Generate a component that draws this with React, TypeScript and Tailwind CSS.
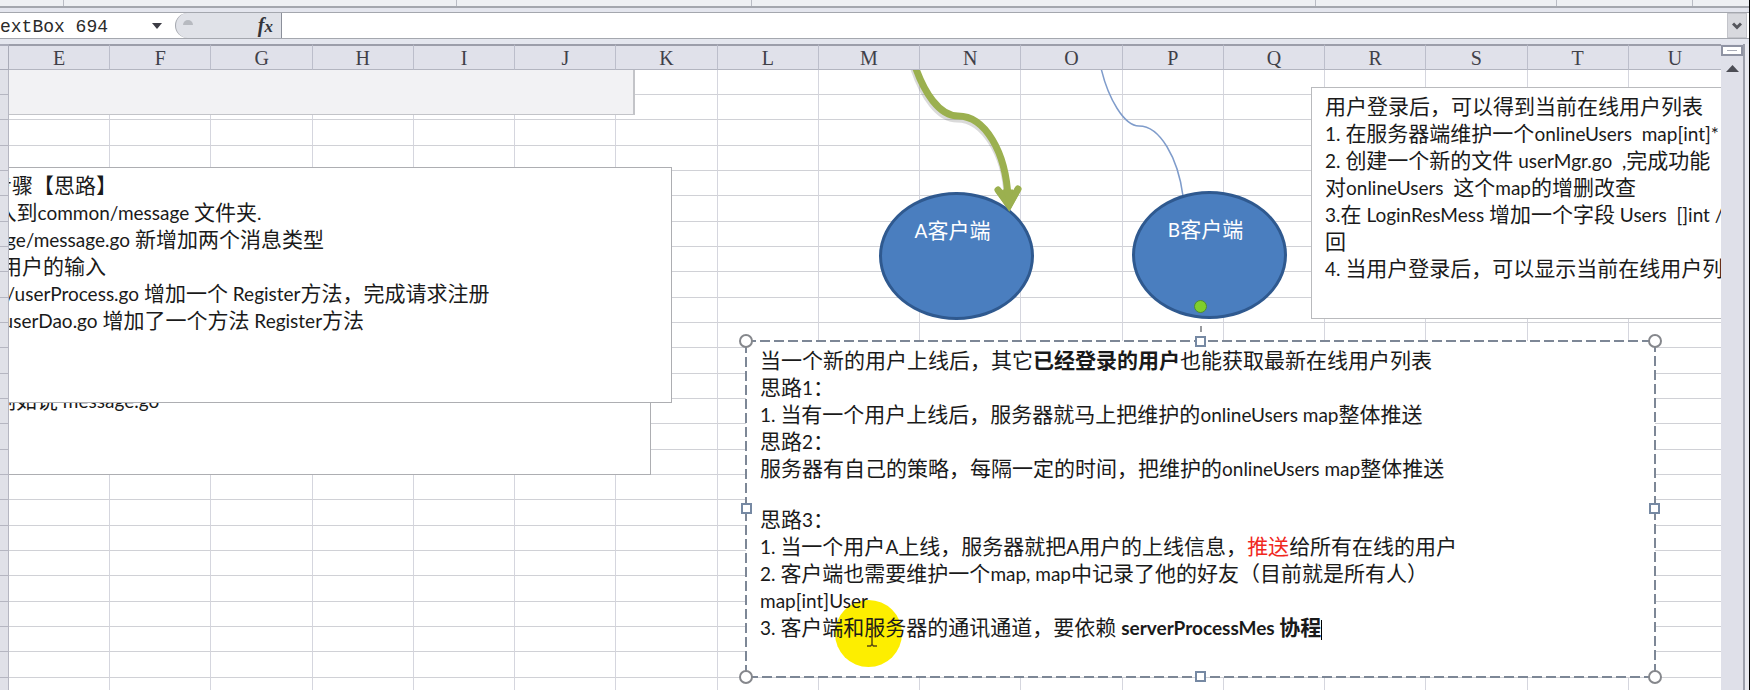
import React from "react";

type Part = { text: string; className?: string };
type Line = Part[];

const columns = ["E", "F", "G", "H", "I", "J", "K", "L", "M", "N", "O", "P", "Q", "R", "S", "T", "U"];
const rows = Array.from({ length: 25 }, (_, i) => i);
const rowHeights = ["h-[25px]", "h-[25px]", "h-[26px]"];

const registerNotes: Line[] = [
  [{ text: "1步骤【思路】" }],
  [{ text: "3.入到common/message 文件夹." }],
  [{ text: "ssage/message.go 新增加两个消息类型" }],
  [{ text: "收用户的输入" }],
  [{ text: "ess/userProcess.go 增加一个 Register方法，完成请求注册" }],
  [{ text: "el/userDao.go 增加了一个方法 Register方法" }],
];

const onlineNotes: Line[] = [
  [{ text: "用户登录后，可以得到当前在线用户列表" }],
  [{ text: "1. 在服务器端维护一个onlineUsers  map[int]*" }],
  [{ text: "2. 创建一个新的文件 userMgr.go  ,完成功能" }],
  [{ text: "对onlineUsers  这个map的增删改查" }],
  [{ text: "3.在 LoginResMess 增加一个字段 Users  []int /" }],
  [{ text: "回" }],
  [{ text: "4. 当用户登录后，可以显示当前在线用户列" }],
];

const pushNotes: Line[] = [
  [
    { text: "当一个新的用户上线后，其它" },
    { text: "已经登录的用户", className: "font-bold" },
    { text: "也能获取最新在线用户列表" },
  ],
  [{ text: "思路1：" }],
  [{ text: "1. 当有一个用户上线后，服务器就马上把维护的onlineUsers map整体推送" }],
  [{ text: "思路2：" }],
  [{ text: "服务器有自己的策略，每隔一定的时间，把维护的onlineUsers map整体推送" }],
  [],
  [{ text: "思路3：" }],
  [
    { text: "1. 当一个用户A上线，服务器就把A用户的上线信息，" },
    { text: "推送", className: "text-[#f0281e]" },
    { text: "给所有在线的用户" },
  ],
  [{ text: "2. 客户端也需要维护一个map, map中记录了他的好友（目前就是所有人）" }],
  [{ text: "map[int]User" }],
  [
    { text: "3. 客户端和服务器的通讯通道，要依赖 " },
    { text: "serverProcessMes 协程", className: "font-bold" },
  ],
];

/* Latin runs are set smaller than the Chinese text around them. */
function Mixed({ text }: { text: string }) {
  return (
    <>
      {text.split(/([\x20-\x7e]+)/).map((run, i) =>
        i % 2 ? (
          <span key={i} className="text-[19px]">
            {run}
          </span>
        ) : (
          run
        ),
      )}
    </>
  );
}

function Notes({ lines, caret = false }: { lines: Line[]; caret?: boolean }) {
  return (
    <div className="whitespace-pre font-['Lato','Noto_Sans_CJK_SC',sans-serif] text-[21px] leading-[27px] text-[#1a1a1a]">
      {lines.map((line, i) =>
        line.length === 0 ? (
          <div key={i} className="h-6" />
        ) : (
          <p key={i} className="h-[27px]">
            {line.map((part, j) => (
              <span key={j} className={part.className}>
                <Mixed text={part.text} />
              </span>
            ))}
            {caret && i === lines.length - 1 && (
              <span className="inline-block h-5 w-px bg-black align-middle" />
            )}
          </p>
        ),
      )}
    </div>
  );
}

function Ribbon() {
  return (
    <div className="flex h-[6px] shrink-0 bg-[#eef0f3]">
      <div className="w-[64px] border-r border-[#b9bcc4]" />
      <div className="w-[393px] border-r border-[#b9bcc4]" />
      <div className="w-[295px] border-r border-[#b9bcc4]" />
      <div className="w-[564px] border-r border-[#b9bcc4]" />
      <div className="w-[241px] border-r border-[#b9bcc4]" />
      <div className="w-[136px] border-r border-[#b9bcc4]" />
    </div>
  );
}

function FormulaBar() {
  return (
    <div className="flex h-[38px] shrink-0 border-t-2 border-[#a4a7ae] bg-[#e4e6ee] pt-[4px] pb-[5px]">
      <div className="flex w-[175px] items-center border-t border-b border-[#a4a7ae] bg-white">
        <label htmlFor="name-box" className="sr-only">
          Name box
        </label>
        <input
          id="name-box"
          defaultValue="extBox 694"
          className="h-full min-w-0 flex-1 bg-transparent pt-[2px] font-['Liberation_Mono',monospace] text-[18px] text-[#2a2a2a] outline-none"
        />
        <button aria-label="Names" className="mr-2 flex h-5 w-5 items-center justify-center">
          <svg width="10" height="6" viewBox="0 0 10 6">
            <path d="M0 0h10L5 6z" fill="#3c3c44" />
          </svg>
        </button>
      </div>
      <div className="flex flex-1 border-t border-b border-[#a4a7ae] bg-white">
        <div className="flex w-[106px] items-center justify-between rounded-l-full border-l border-[#a4a7ae] bg-[#e0e2e8] pr-2 pl-[7px]">
          <svg width="10" height="12" viewBox="0 0 10 12">
            <path d="M0 5a5 5 0 0 1 10 0z" fill="#b7bac0" />
          </svg>
          <button
            aria-label="Insert function"
            className="font-['Liberation_Serif',serif] text-[20px] leading-5 font-bold text-[#33343a] italic"
          >
            f<span className="text-[17px]">x</span>
          </button>
        </div>
        <label htmlFor="formula" className="sr-only">
          Formula
        </label>
        <input id="formula" className="min-w-0 flex-1 border-l border-[#8b8f9a] bg-white outline-none" />
        <button
          aria-label="Expand"
          className="mr-[2px] flex w-5 items-center justify-center border border-[#c3c4ca] bg-[#d8d9de]"
        >
          <svg width="10" height="8" viewBox="0 0 10 8" fill="none" stroke="#55565c" strokeWidth="3">
            <path d="M1 1.500L5 5.500L9 1.500" />
          </svg>
        </button>
      </div>
    </div>
  );
}

function Cells() {
  return (
    <table className="w-full table-fixed border-separate border-spacing-0">
      <colgroup>
        <col className="w-[9px]" />
        {columns.map((c) => (
          <col key={c} className={c === "U" ? "w-[92px]" : "w-[101px]"} />
        ))}
      </colgroup>
      <thead>
        <tr>
          <th className="h-[26px] border-t-2 border-r border-b border-[#a9abb8] bg-[#e0e1ea] p-0" />
          {columns.map((c) => (
            <th
              key={c}
              className="h-[26px] border-t-2 border-r border-b border-t-[#9c9eaa] border-r-[#bcbecb] border-b-[#b3b5c0] bg-[#e0e1ea] p-0 pt-[2px] font-['Liberation_Serif',serif] text-[20px] leading-[21px] font-normal text-[#3f4048] last:border-r-0"
            >
              {c}
            </th>
          ))}
        </tr>
      </thead>
      <tbody>
        {rows.map((r) => (
          <tr key={r}>
            <th className={`${rowHeights[r % 3]} border-r border-b border-[#b5b6c1] bg-[#e0e1e8] p-0`} />
            {columns.map((c) => (
              <td
                key={c}
                className="border-r border-b border-r-[#d5d6de] border-b-[#d0d1d6] bg-white p-0 last:border-r-0"
              />
            ))}
          </tr>
        ))}
      </tbody>
    </table>
  );
}

function Connectors() {
  return (
    <svg className="absolute top-[26px] left-[880px]" width="330" height="160" viewBox="880 70 330 160" fill="none">
      <g stroke="#555" strokeOpacity="0.22" strokeWidth="7" transform="translate(-1 3)">
        <path d="M915 66C924 92 939 116 958 116C985 116 1006 152 1008 192" />
      </g>
      <g stroke="#9bb04f" strokeWidth="7">
        <path d="M915 66C924 92 939 116 958 116C985 116 1006 152 1008 198" />
        <path d="M998 190L1009 205L1018 189" strokeLinecap="round" strokeLinejoin="miter" />
        <path d="M1002 192L1009 205L1014 192z" fill="#9bb04f" strokeWidth="3" />
      </g>
      <path d="M1101 68C1108 98 1124 126 1139 126C1160 126 1178 158 1183 196" stroke="#7f9ccb" strokeWidth="1.500" />
    </svg>
  );
}

function Client({ name, className }: { name: string; className: string }) {
  return (
    <div
      className={`absolute h-[128px] w-[155px] rounded-[50%] border-3 border-[#2f598f] bg-[#4a7ebf] pt-[20px] pr-2 text-center font-['Lato','Noto_Sans_CJK_SC',sans-serif] text-[21px] leading-[30px] text-white ${className}`}
    >
      <Mixed text={name} />
    </div>
  );
}

function Selection() {
  const corner = "absolute h-[14px] w-[14px] rounded-full border-2 border-[#85878c] bg-white";
  const side = "absolute h-[11px] w-[11px] border-2 border-[#7689a3] bg-white";
  return (
    <>
      <svg className="absolute inset-0 h-full w-full overflow-visible" fill="none">
        <path d="M455 -2V-18" stroke="#77797f" strokeWidth="1.500" strokeDasharray="6 5" strokeDashoffset="-7" />
        <rect width="100%" height="100%" stroke="#7d8796" strokeWidth="2" strokeDasharray="10 4" />
      </svg>
      <span className="absolute -top-[41px] left-[448px] h-[13px] w-[13px] rounded-full border border-[#4c8a35] bg-[#7fce2c]" />
      <span className={`${corner} -top-[7px] -left-[7px]`} />
      <span className={`${corner} -top-[7px] -right-[7px]`} />
      <span className={`${corner} -bottom-[7px] -left-[7px]`} />
      <span className={`${corner} -right-[7px] -bottom-[7px]`} />
      <span className={`${side} -top-[5px] left-[449px]`} />
      <span className={`${side} -bottom-[5px] left-[449px]`} />
      <span className={`${side} top-[162px] -left-[5px]`} />
      <span className={`${side} top-[162px] -right-[5px]`} />
    </>
  );
}

function Canvas() {
  return (
    <div className="absolute inset-0">
      <div className="absolute top-[26px] left-[9px] h-[45px] w-[626px] border-r-2 border-b border-[#c3c4c8] bg-[#f2f2f4]" />
      <div className="absolute top-[340px] left-[9px] h-[91px] w-[642px] overflow-hidden border-r border-b border-[#adaeb2] bg-white">
        <div className="mt-[2px] -ml-[14px]">
          <Notes lines={[[{ text: "例如说 message.go" }]]} />
        </div>
      </div>
      <div className="absolute top-[123px] left-[9px] flex h-[236px] w-[663px] overflow-hidden border-t border-r border-b border-[#adaeb2] bg-white pt-[3px]">
        <div className="-ml-[29px]">
          <Notes lines={registerNotes} />
        </div>
      </div>
      <Connectors />
      <Client name="A客户端" className="top-[148px] left-[879px]" />
      <Client name="B客户端" className="top-[147px] left-[1132px]" />
      <svg
        className="absolute top-[139px] left-[990px]"
        width="36"
        height="32"
        viewBox="990 183 36 32"
        fill="#9bb04f"
        stroke="#9bb04f"
        strokeLinecap="round"
      >
        <path d="M998 190L1009 206L1018 189" fill="none" strokeWidth="6" />
        <path d="M1003 190H1013L1009 206z" />
      </svg>
      <div className="absolute top-[43px] right-0 left-[1311px] h-[232px] overflow-hidden border-t border-b border-l border-[#b9babd] bg-white pt-[4px] pl-[13px]">
        <Notes lines={onlineNotes} />
      </div>
      <div className="absolute top-[297px] left-[746px] h-[336px] w-[909px] bg-white pt-[5px] pl-[14px]">
        <div className="absolute top-[259px] left-[89px] h-[67px] w-[67px] rounded-full bg-[#fdee00]" />
        <div className="relative">
          <Notes lines={pushNotes} caret />
        </div>
        <svg className="absolute top-[286px] left-[120px]" width="12" height="20" viewBox="0 0 12 20" fill="none">
          <path d="M6 2V18M1 19H4.500L6 17.500L7.500 19H11M3 1H5L6 2L7 1H9" stroke="#5a4a10" strokeWidth="1.500" />
        </svg>
        <Selection />
      </div>
    </div>
  );
}

function ScrollBar() {
  return (
    <div className="flex w-[24px] shrink-0 flex-col items-center border-r-2 border-[#9c9fab] bg-[#dfe0e9]">
      <button
        aria-label="Split"
        className="mt-[1px] flex h-[11px] w-[22px] items-center justify-center border-2 border-[#8f93a3] bg-white"
      >
        <span className="h-px w-[10px] bg-[#a9acb8]" />
      </button>
      <button aria-label="Scroll up" className="mt-[9px]">
        <svg width="13" height="7" viewBox="0 0 13 7">
          <path d="M0 7L6.500 0L13 7z" fill="#4c4d55" />
        </svg>
      </button>
    </div>
  );
}

export default function App() {
  return (
    <div className="flex h-screen flex-col overflow-hidden border-r border-black bg-[#e4e6ee]">
      <Ribbon />
      <FormulaBar />
      <div className="flex min-h-0 flex-1">
        <main className="relative min-w-0 flex-1 overflow-hidden">
          <Cells />
          <Canvas />
        </main>
        <ScrollBar />
        <div className="w-[4px] shrink-0 bg-[#e9eaf0]" />
      </div>
    </div>
  );
}
